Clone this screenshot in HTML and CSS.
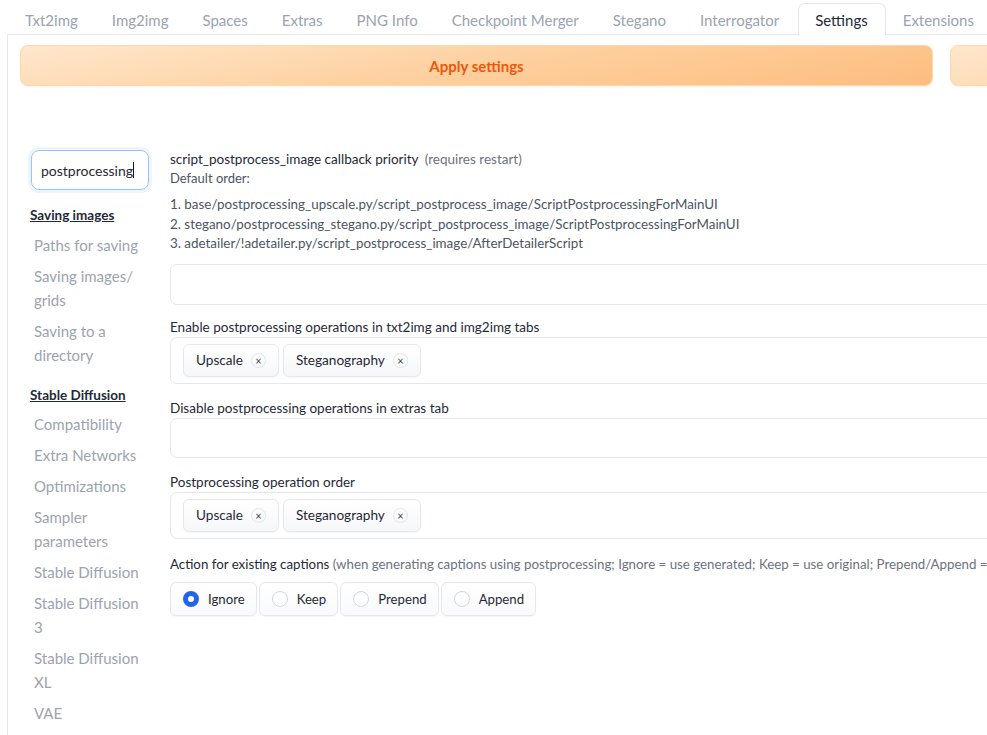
FILE: index.html
```html
<!DOCTYPE html>
<html>
<head>
<meta charset="utf-8">
<link rel="stylesheet" href="styles.css">
</head>
<body>
<div class="app">
  <nav class="tabs">
    <div class="tab">Txt2img</div>
    <div class="tab">Img2img</div>
    <div class="tab">Spaces</div>
    <div class="tab">Extras</div>
    <div class="tab">PNG Info</div>
    <div class="tab">Checkpoint Merger</div>
    <div class="tab">Stegano</div>
    <div class="tab">Interrogator</div>
    <div class="tab selected">Settings</div>
    <div class="tab">Extensions</div>
  </nav>
  <div class="panel">
    <div class="actions">
      <button class="btn-primary">Apply settings</button>
      <button class="btn-primary"></button>
    </div>
    <div class="settings">
      <aside class="sidebar">
        <div class="search"><span>postprocessing</span><span class="caret"></span></div>
        <div class="group">Saving images</div>
        <div class="item">Paths for saving</div>
        <div class="item">Saving images/<br>grids</div>
        <div class="item">Saving to a<br>directory</div>
        <div class="group">Stable Diffusion</div>
        <div class="item">Compatibility</div>
        <div class="item">Extra Networks</div>
        <div class="item">Optimizations</div>
        <div class="item">Sampler<br>parameters</div>
        <div class="item">Stable Diffusion</div>
        <div class="item">Stable Diffusion<br>3</div>
        <div class="item">Stable Diffusion<br>XL</div>
        <div class="item">VAE</div>
      </aside>
      <main class="content">
        <section class="block first">
          <div class="label">script_postprocess_image callback priority <span class="muted req">(requires restart)</span></div>
          <div class="info">Default order:</div>
          <ol class="order">
            <li>1. base/postprocessing_upscale.py/script_postprocess_image/ScriptPostprocessingForMainUI</li>
            <li>2. stegano/postprocessing_stegano.py/script_postprocess_image/ScriptPostprocessingForMainUI</li>
            <li>3. adetailer/!adetailer.py/script_postprocess_image/AfterDetailerScript</li>
          </ol>
          <div class="box input"></div>
        </section>
        <section class="block">
          <div class="label">Enable postprocessing operations in txt2img and img2img tabs</div>
          <div class="box chips">
            <span class="chip">Upscale<span class="x">×</span></span>
            <span class="chip">Steganography<span class="x">×</span></span>
          </div>
        </section>
        <section class="block">
          <div class="label">Disable postprocessing operations in extras tab</div>
          <div class="box empty"></div>
        </section>
        <section class="block">
          <div class="label">Postprocessing operation order</div>
          <div class="box chips">
            <span class="chip">Upscale<span class="x">×</span></span>
            <span class="chip">Steganography<span class="x">×</span></span>
          </div>
        </section>
        <section class="block">
          <div class="label small">Action for existing captions <span class="muted">(when generating captions using postprocessing; Ignore = use generated; Keep = use original; Prepend/Append = combine both)</span></div>
          <div class="radios">
            <label class="radio"><span class="dot checked"></span>Ignore</label>
            <label class="radio"><span class="dot"></span>Keep</label>
            <label class="radio"><span class="dot"></span>Prepend</label>
            <label class="radio"><span class="dot"></span>Append</label>
          </div>
        </section>
      </main>
    </div>
  </div>
</div>
</body>
</html>
```
FILE: styles.css
```css
html, body {
  margin: 0;
  padding: 0;
  background: #ffffff;
  overflow: hidden;
}
body {
  font-family: Lato, "Noto Sans", sans-serif;
  color: #1f2937;
  width: 987px;
  height: 735px;
}
.app {
  padding-left: 7px;
  width: 2000px;
}
.tabs {
  display: flex;
  gap: 0;
  padding-left: 1px;
  padding-top: 3px;
  height: 31px;
  position: relative;
  z-index: 1;
}
.tab {
  padding: 0 16px;
  height: 31px;
  line-height: 32px;
  font-size: 15px;
  color: #9aa3b2;
  box-sizing: border-box;
  border: 1px solid transparent;
  border-bottom: none;
  white-space: nowrap;
}
.tab.selected {
  color: #1f2937;
  background: #ffffff;
  border-color: #e5e7eb;
  border-radius: 7px 7px 0 0;
  height: 32px;
  margin-left: 2px;
  padding: 0 17px 0 16px;
}
.panel {
  border-top: 1px solid #e5e7eb;
  border-left: 1px solid #e5e7eb;
  padding: 10px 0 0 12px;
  height: 740px;
}
.actions {
  display: flex;
  gap: 17px;
}
.btn-primary {
  flex: 0 0 913px;
  height: 41px;
  border: 1px solid #fed7aa;
  border-radius: 8px;
  background: linear-gradient(170deg, #ffe7cc 0%, #fdd09f 50%, #fdbd7e 100%);
  color: #ea580c;
  font-family: Lato, "Noto Sans", sans-serif;
  font-weight: 700;
  font-size: 15px;
  box-shadow: 0 1px 2px rgba(0,0,0,0.05);
}
.settings {
  display: flex;
  margin-top: 64px;
}
.sidebar {
  flex: 0 0 150px;
  padding-left: 10px;
  box-sizing: border-box;
}
.search {
  margin-left: 1px;
  width: 118px;
  height: 40px;
  box-sizing: border-box;
  border: 1px solid #93c5fd;
  border-radius: 8px;
  box-shadow: 0 0 0 3px #eef5ff;
  padding: 0 9px;
  display: flex;
  align-items: center;
  font-size: 14px;
  color: #1f2937;
}
.caret {
  display: inline-block;
  width: 1px;
  height: 16px;
  background: #111827;
}
.group {
  font-size: 13.5px;
  font-weight: 700;
  text-decoration: underline;
  color: #1f2937;
  margin-top: 16px;
  line-height: 18px;
  margin-bottom: 5px;
}
.item + .group {
  margin-top: 16px;
  margin-bottom: 4px;
}
.item {
  padding: 3.5px 0 3.5px 4px;
  font-size: 15px;
  line-height: 24px;
  color: #9ca3af;
  white-space: nowrap;
}
.content {
  flex: 1;
  display: flex;
  flex-direction: column;
  gap: 14px;
}
.first {
  margin-bottom: -2px;
}
.label {
  font-size: 13.5px;
  line-height: 20px;
  color: #1f2937;
  white-space: nowrap;
}
.label.small {
  font-size: 13.3px;
  margin-top: 1px;
  margin-bottom: 8px;
}
.muted {
  color: #6b7280;
}
.req {
  margin-left: 3px;
}
.first .label {
  line-height: 18px;
}
.info {
  font-size: 13px;
  line-height: 20px;
  color: #4b5563;
}
.order {
  list-style: none;
  margin: 7px 0 0 0;
  padding: 0;
  font-size: 13.4px;
  line-height: 19.5px;
  color: #4b5563;
  white-space: nowrap;
}
.box {
  border: 1px solid #e5e7eb;
  border-radius: 7px;
  box-sizing: border-box;
  background: #ffffff;
}
.box.input {
  margin-top: 10px;
  height: 41px;
}
.box.empty {
  height: 40px;
}
.box.chips {
  height: 47px;
  padding: 6px 12px;
  display: flex;
  gap: 4px;
  align-items: center;
}
.chip {
  height: 33px;
  box-sizing: border-box;
  border: 1px solid #e5e7eb;
  border-radius: 6px;
  background: linear-gradient(180deg, #ffffff, #f6f7f9);
  padding: 0 12px;
  display: inline-flex;
  align-items: center;
  font-size: 13.6px;
  color: #1f2937;
  box-shadow: 0 1px 1px rgba(0,0,0,0.03);
}
.x {
  width: 15px;
  height: 15px;
  box-sizing: border-box;
  border: 1px solid #e2e5ea;
  border-radius: 50%;
  margin-left: 8px;
  display: inline-flex;
  align-items: center;
  justify-content: center;
  font-size: 11px;
  line-height: 1;
  color: #374151;
}
.radios {
  display: flex;
  gap: 2px;
}
.radio {
  height: 34px;
  box-sizing: border-box;
  border: 1px solid #e5e7eb;
  border-radius: 6px;
  background: linear-gradient(180deg, #ffffff, #f9fafb);
  padding: 0 11px 0 12px;
  display: inline-flex;
  align-items: center;
  font-size: 13.2px;
  color: #1f2937;
  box-shadow: 0 1px 1px rgba(0,0,0,0.04);
}
.dot {
  width: 16px;
  height: 16px;
  box-sizing: border-box;
  border: 1px solid #d1d5db;
  border-radius: 50%;
  background: #ffffff;
  margin-right: 9px;
}
.dot.checked {
  border: 5px solid #2563eb;
  background: #ffffff;
}
```
